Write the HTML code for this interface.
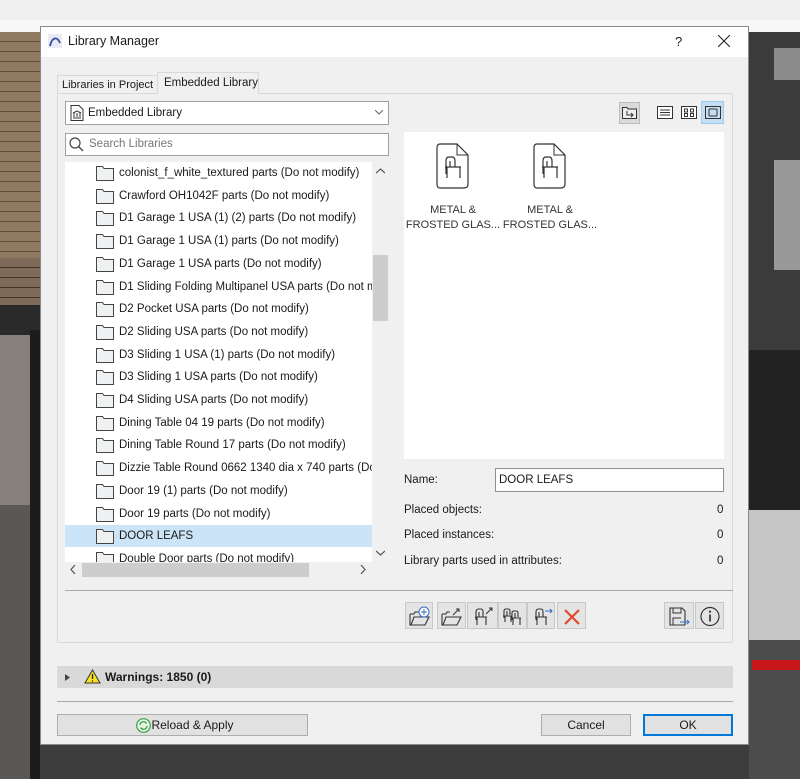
<!DOCTYPE html>
<html><head><meta charset="utf-8"><style>
*{box-sizing:border-box;margin:0;padding:0}
body{width:800px;height:779px;position:relative;overflow:hidden;background:#eeeeee;font-family:"Liberation Sans",sans-serif;font-size:11.5px;color:#1a1a1a}
.a{position:absolute;white-space:nowrap}
.row{position:absolute;left:0;height:22px;width:307px;line-height:22px;white-space:nowrap;overflow:hidden}
.row svg{position:absolute;left:31px;top:3px}
.row span{position:absolute;left:54px}
.tb{position:absolute;top:602px;height:27px;background:#e4e4e4;border:1px solid #c8c8c8}
.tb svg{position:absolute;left:3px;top:3px}
.btn{position:absolute;background:#e1e1e1;border:1px solid #adadad;text-align:center;line-height:20px;font-size:12px}
</style></head><body>
<div class="a" style="left:0;top:0;width:800px;height:20px;background:#f0f0f0"></div>
<div class="a" style="left:0;top:20px;width:800px;height:12px;background:#f7f7f7"></div>
<div class="a" style="left:0;top:32px;width:40px;height:226px;background:repeating-linear-gradient(#917a62 0 9px,#5e4d3d 9px 10px)"></div>
<div class="a" style="left:0;top:258px;width:40px;height:52px;background:repeating-linear-gradient(#7d6a58 0 9px,#3f352b 9px 10px)"></div>
<div class="a" style="left:0;top:305px;width:40px;height:30px;background:#2a2a2a"></div>
<div class="a" style="left:0;top:335px;width:40px;height:170px;background:#86807a"></div>
<div class="a" style="left:30px;top:330px;width:10px;height:449px;background:#1c1c1c"></div>
<div class="a" style="left:0;top:505px;width:30px;height:274px;background:#5a5755"></div>
<div class="a" style="left:749px;top:32px;width:51px;height:318px;background:#3b3b3b"></div>
<div class="a" style="left:774px;top:48px;width:26px;height:32px;background:#8b8b8b"></div>
<div class="a" style="left:774px;top:160px;width:26px;height:110px;background:#999"></div>
<div class="a" style="left:749px;top:350px;width:51px;height:160px;background:#222"></div>
<div class="a" style="left:749px;top:510px;width:51px;height:130px;background:#c6c6c6"></div>
<div class="a" style="left:749px;top:640px;width:51px;height:139px;background:#4c4c4c"></div>
<div class="a" style="left:752px;top:660px;width:48px;height:10px;background:#c8161b"></div>
<div class="a" style="left:40px;top:745px;width:709px;height:34px;background:#3d3d3d"></div>

<div class="a" style="left:40px;top:26px;width:709px;height:719px;background:#f0f0f0;border:1px solid #8a8a8a"></div>
<div class="a" style="left:41px;top:27px;width:707px;height:30px;background:#fff"></div>
<svg class="a" style="left:48px;top:34px" width="14" height="14"><rect width="14" height="14" fill="#e8eaf4"/><path d="M2 12 C4 3 9 2 12 9" stroke="#3c4aa0" stroke-width="1.8" fill="none"/></svg>
<div class="a" style="left:68px;top:34px;font-size:12.5px">Library Manager</div>
<div class="a" style="left:675px;top:34px;font-size:13px">?</div>
<svg class="a" style="left:718px;top:35px" width="12" height="12"><path d="M0 0L12 12M12 0L0 12" stroke="#222" stroke-width="1.1"/></svg>

<div class="a" style="left:57px;top:93px;width:676px;height:550px;border:1px solid #d9d9d9;background:#f0f0f0"></div>
<div class="a" style="left:57px;top:75px;width:101px;height:19px;border:1px solid #d9d9d9;border-bottom:none;line-height:18px;padding-left:4px;font-size:11px;overflow:hidden">Libraries in Project</div>
<div class="a" style="left:157px;top:72px;width:102px;height:22px;border:1px solid #d9d9d9;border-bottom:none;background:#f0f0f0;line-height:20px;padding-left:6px;font-size:11.5px">Embedded Library</div>

<div class="a" style="left:65px;top:101px;width:324px;height:24px;background:#fff;border:1px solid #a0a0a0"></div>
<svg class="a" style="left:70px;top:105px" width="14" height="16"><path d="M1 .5H9L13 4.5V15.5H1Z" fill="#fff" stroke="#333"/><path d="M3 8L7 6L11 8M4 8V12M7 8V12M10 8V12M3 13H11" stroke="#333" fill="none"/></svg>
<div class="a" style="left:88px;top:107px">Embedded Library</div>
<svg class="a" style="left:375px;top:110px" width="8" height="6"><path d="M0 0L4 4L8 0" stroke="#666" fill="none"/></svg>
<div class="a" style="left:65px;top:133px;width:324px;height:23px;background:#fff;border:1px solid #a0a0a0"></div>
<svg class="a" style="left:69px;top:137px" width="15" height="15"><circle cx="6" cy="6" r="5" stroke="#444" stroke-width="1.2" fill="none"/><path d="M9.5 9.5L14 14" stroke="#444" stroke-width="1.3"/></svg>
<div class="a" style="left:89px;top:138px;color:#777">Search Libraries</div>

<div class="a" style="left:65px;top:162px;width:307px;height:400px;background:#fff;overflow:hidden">
<div class="row" style="top:0"><svg width="18" height="16"><path d="M.5 2.5V15.5H17.5V3.5H8L6.5 1.5H.5Z" fill="#eef0f2" stroke="#444"/></svg><span>colonist_f_white_textured parts (Do not modify)</span></div>
<div class="row" style="top:22.7px"><svg width="18" height="16"><path d="M.5 2.5V15.5H17.5V3.5H8L6.5 1.5H.5Z" fill="#eef0f2" stroke="#444"/></svg><span>Crawford OH1042F parts (Do not modify)</span></div>
<div class="row" style="top:45.4px"><svg width="18" height="16"><path d="M.5 2.5V15.5H17.5V3.5H8L6.5 1.5H.5Z" fill="#eef0f2" stroke="#444"/></svg><span>D1 Garage 1 USA (1) (2) parts (Do not modify)</span></div>
<div class="row" style="top:68.1px"><svg width="18" height="16"><path d="M.5 2.5V15.5H17.5V3.5H8L6.5 1.5H.5Z" fill="#eef0f2" stroke="#444"/></svg><span>D1 Garage 1 USA (1) parts (Do not modify)</span></div>
<div class="row" style="top:90.8px"><svg width="18" height="16"><path d="M.5 2.5V15.5H17.5V3.5H8L6.5 1.5H.5Z" fill="#eef0f2" stroke="#444"/></svg><span>D1 Garage 1 USA parts (Do not modify)</span></div>
<div class="row" style="top:113.5px"><svg width="18" height="16"><path d="M.5 2.5V15.5H17.5V3.5H8L6.5 1.5H.5Z" fill="#eef0f2" stroke="#444"/></svg><span>D1 Sliding Folding Multipanel USA parts (Do not modify)</span></div>
<div class="row" style="top:136.2px"><svg width="18" height="16"><path d="M.5 2.5V15.5H17.5V3.5H8L6.5 1.5H.5Z" fill="#eef0f2" stroke="#444"/></svg><span>D2 Pocket USA parts (Do not modify)</span></div>
<div class="row" style="top:158.9px"><svg width="18" height="16"><path d="M.5 2.5V15.5H17.5V3.5H8L6.5 1.5H.5Z" fill="#eef0f2" stroke="#444"/></svg><span>D2 Sliding USA parts (Do not modify)</span></div>
<div class="row" style="top:181.6px"><svg width="18" height="16"><path d="M.5 2.5V15.5H17.5V3.5H8L6.5 1.5H.5Z" fill="#eef0f2" stroke="#444"/></svg><span>D3 Sliding 1 USA (1) parts (Do not modify)</span></div>
<div class="row" style="top:204.3px"><svg width="18" height="16"><path d="M.5 2.5V15.5H17.5V3.5H8L6.5 1.5H.5Z" fill="#eef0f2" stroke="#444"/></svg><span>D3 Sliding 1 USA parts (Do not modify)</span></div>
<div class="row" style="top:227px"><svg width="18" height="16"><path d="M.5 2.5V15.5H17.5V3.5H8L6.5 1.5H.5Z" fill="#eef0f2" stroke="#444"/></svg><span>D4 Sliding USA parts (Do not modify)</span></div>
<div class="row" style="top:249.7px"><svg width="18" height="16"><path d="M.5 2.5V15.5H17.5V3.5H8L6.5 1.5H.5Z" fill="#eef0f2" stroke="#444"/></svg><span>Dining Table 04 19 parts (Do not modify)</span></div>
<div class="row" style="top:272.4px"><svg width="18" height="16"><path d="M.5 2.5V15.5H17.5V3.5H8L6.5 1.5H.5Z" fill="#eef0f2" stroke="#444"/></svg><span>Dining Table Round 17 parts (Do not modify)</span></div>
<div class="row" style="top:295.1px"><svg width="18" height="16"><path d="M.5 2.5V15.5H17.5V3.5H8L6.5 1.5H.5Z" fill="#eef0f2" stroke="#444"/></svg><span>Dizzie Table Round 0662 1340 dia x 740 parts (Do not modify)</span></div>
<div class="row" style="top:317.8px"><svg width="18" height="16"><path d="M.5 2.5V15.5H17.5V3.5H8L6.5 1.5H.5Z" fill="#eef0f2" stroke="#444"/></svg><span>Door 19 (1) parts (Do not modify)</span></div>
<div class="row" style="top:340.5px"><svg width="18" height="16"><path d="M.5 2.5V15.5H17.5V3.5H8L6.5 1.5H.5Z" fill="#eef0f2" stroke="#444"/></svg><span>Door 19 parts (Do not modify)</span></div>
<div class="row" style="top:363.2px;background:#cce4f7"><svg width="18" height="16"><path d="M.5 2.5V15.5H17.5V3.5H8L6.5 1.5H.5Z" fill="#eef0f2" stroke="#444"/></svg><span>DOOR LEAFS</span></div>
<div class="row" style="top:385.9px"><svg width="18" height="16"><path d="M.5 2.5V15.5H17.5V3.5H8L6.5 1.5H.5Z" fill="#eef0f2" stroke="#444"/></svg><span>Double Door parts (Do not modify)</span></div>
</div>
<div class="a" style="left:372px;top:162px;width:17px;height:400px;background:#f0f0f0"></div>
<div class="a" style="left:373px;top:255px;width:15px;height:66px;background:#cdcdcd"></div>
<svg class="a" style="left:376px;top:168px" width="9" height="6"><path d="M0 5L4.5 1L9 5" stroke="#555" fill="none" stroke-width="1.2"/></svg>
<svg class="a" style="left:376px;top:550px" width="9" height="6"><path d="M0 1L4.5 5L9 1" stroke="#555" fill="none" stroke-width="1.2"/></svg>
<div class="a" style="left:65px;top:562px;width:307px;height:16px;background:#f0f0f0"></div>
<div class="a" style="left:82px;top:563px;width:227px;height:14px;background:#cdcdcd"></div>
<svg class="a" style="left:70px;top:565px" width="6" height="9"><path d="M5 0L1 4.5L5 9" stroke="#555" fill="none" stroke-width="1.2"/></svg>
<svg class="a" style="left:360px;top:565px" width="6" height="9"><path d="M1 0L5 4.5L1 9" stroke="#555" fill="none" stroke-width="1.2"/></svg>
<div class="a" style="left:65px;top:590px;width:668px;height:1px;background:#a8a8a8"></div>

<div class="a" style="left:619px;top:102px;width:21px;height:22px;background:#dadada;border:1px solid #bdbdbd"></div>
<svg class="a" style="left:622px;top:106px" width="15" height="13"><path d="M.5 1.5H5L6 3H14.5V12.5H.5Z" fill="#eee" stroke="#333"/><path d="M5 5V9H11M9 7L11 9L9 11" stroke="#333" fill="none"/></svg>
<svg class="a" style="left:657px;top:106px" width="16" height="13"><rect x=".5" y=".5" width="15" height="12" fill="#fff" stroke="#333"/><path d="M3 4H13M3 6.5H13M3 9H13" stroke="#333"/></svg>
<svg class="a" style="left:681px;top:106px" width="16" height="13"><rect x=".5" y=".5" width="15" height="12" fill="#fff" stroke="#333"/><rect x="3.5" y="3" width="3" height="3" fill="none" stroke="#333"/><rect x="9.5" y="3" width="3" height="3" fill="none" stroke="#333"/><rect x="3.5" y="7.5" width="3" height="3" fill="none" stroke="#333"/><rect x="9.5" y="7.5" width="3" height="3" fill="none" stroke="#333"/></svg>
<div class="a" style="left:701px;top:101px;width:23px;height:23px;background:#c4dff3;border:1px solid #9ccbea"></div>
<svg class="a" style="left:705px;top:106px" width="16" height="13"><rect x=".5" y=".5" width="15" height="12" fill="none" stroke="#333"/><rect x="4" y="3" width="8" height="7" rx="1" fill="none" stroke="#333"/></svg>

<div class="a" style="left:404px;top:132px;width:320px;height:327px;background:#fff"></div>
<svg class="a" style="left:436px;top:143px" width="34" height="46"><path d="M4 1H21L32 12V41Q32 45 28 45H4Q1 45 1 41V5Q1 1 4 1Z" fill="#fff" stroke="#333" stroke-width="1.2"/><path d="M21 1V12H32" fill="none" stroke="#333"/><path d="M10 31V18Q10 14 13 14H16Q19 14 19 18V24M9 24H25M11 24V35M24 24V35M14 18V24" fill="none" stroke="#333" stroke-width="1.2"/></svg>
<svg class="a" style="left:533px;top:143px" width="34" height="46"><path d="M4 1H21L32 12V41Q32 45 28 45H4Q1 45 1 41V5Q1 1 4 1Z" fill="#fff" stroke="#333" stroke-width="1.2"/><path d="M21 1V12H32" fill="none" stroke="#333"/><path d="M10 31V18Q10 14 13 14H16Q19 14 19 18V24M9 24H25M11 24V35M24 24V35M14 18V24" fill="none" stroke="#333" stroke-width="1.2"/></svg>
<div class="a" style="left:404px;top:203px;width:98px;text-align:center;line-height:15px;font-size:11px;color:#333">METAL &amp;<br>FROSTED GLAS...</div>
<div class="a" style="left:501px;top:203px;width:98px;text-align:center;line-height:15px;font-size:11px;color:#333">METAL &amp;<br>FROSTED GLAS...</div>

<div class="a" style="left:404px;top:474px">Name:</div>
<div class="a" style="left:495px;top:468px;width:229px;height:24px;background:#fff;border:1px solid #8f8f8f;padding:5px 0 0 3px">DOOR LEAFS</div>
<div class="a" style="left:404px;top:504px">Placed objects:</div><div class="a" style="left:717px;top:504px">0</div>
<div class="a" style="left:404px;top:529px">Placed instances:</div><div class="a" style="left:717px;top:529px">0</div>
<div class="a" style="left:404px;top:555px">Library parts used in attributes:</div><div class="a" style="left:717px;top:555px">0</div>

<div class="tb" style="left:405px;width:28px"><svg width="22" height="21"><path d="M1 8H5L6 6H10M1 8V19H16L20 11H5L2 19" fill="none" stroke="#333" stroke-width="1.1"/><circle cx="15" cy="6" r="5" fill="#fff" stroke="#2e6fc4"/><path d="M15 3V9M12 6H18" stroke="#2e6fc4"/></svg></div>
<div class="tb" style="left:437px;width:29px"><svg width="22" height="21"><path d="M1 8H5L6 6H9M1 8V19H16L20 11H5L2 19" fill="none" stroke="#333" stroke-width="1.1"/><path d="M12 9L18 3M15 3H18V6" stroke="#333" fill="none"/></svg></div>
<div class="tb" style="left:467px;width:31px"><svg width="24" height="21"><path d="M5 14V6Q5 3 8 3H10Q12 3 12 6V11M4 11H16M6 11V19M15 11V19M8 6V11" fill="none" stroke="#333" stroke-width="1.1"/><path d="M15 8L21 2M18 2H21V5" stroke="#333" fill="none"/></svg></div>
<div class="tb" style="left:498px;width:29px"><svg width="24" height="21"><path d="M2 12V5Q2 3 4 3H6Q8 3 8 5V9M1 10H10M3 10V16M9 10V16M5 5V10" fill="none" stroke="#333" stroke-width="1.1"/><path d="M10 14V7Q10 5 12 5H14Q16 5 16 7V11M9 12H19M11 12V19M18 12V19M13 7V12" fill="none" stroke="#333" stroke-width="1.1"/></svg></div>
<div class="tb" style="left:527px;width:28px"><svg width="24" height="21"><path d="M5 14V6Q5 3 8 3H10Q12 3 12 6V11M4 11H16M6 11V19M15 11V19M8 6V11" fill="none" stroke="#333" stroke-width="1.1"/><path d="M14 5H21M19 3L21 5L19 7" stroke="#2e6fc4" fill="none"/></svg></div>
<div class="tb" style="left:557px;width:29px"><svg width="22" height="21"><path d="M4 4L18 18M18 4L4 18" stroke="#e0492a" stroke-width="2.2"/></svg></div>
<div class="tb" style="left:664px;width:30px"><svg width="24" height="21"><path d="M2 2H14L17 5V19H2Z" fill="none" stroke="#333" stroke-width="1.1"/><path d="M5 2V7H13V2M5 19V12H13" fill="none" stroke="#333"/><path d="M12 16H21M19 14L21 16L19 18" stroke="#2e6fc4" fill="none"/></svg></div>
<div class="tb" style="left:695px;width:29px"><svg width="22" height="21"><circle cx="11" cy="10.5" r="9" fill="none" stroke="#333" stroke-width="1.2"/><path d="M11 8.5V15.5" stroke="#333" stroke-width="1.7"/><circle cx="11" cy="5.6" r="1.1" fill="#333"/></svg></div>

<div class="a" style="left:57px;top:666px;width:676px;height:22px;background:#d9d9d9"></div>
<svg class="a" style="left:65px;top:674px" width="5" height="7"><path d="M0 0L5 3.5L0 7Z" fill="#444"/></svg>
<svg class="a" style="left:84px;top:669px" width="17" height="15"><path d="M8.5 1L16 14H1Z" fill="#f6e31c" stroke="#333"/><path d="M8.5 5V10" stroke="#222" stroke-width="1.3"/><circle cx="8.5" cy="12" r=".8" fill="#222"/></svg>
<div class="a" style="left:105px;top:670px;font-weight:bold;font-size:12px">Warnings: 1850 (0)</div>
<div class="a" style="left:57px;top:701px;width:676px;height:1px;background:#a8a8a8"></div>

<div class="btn" style="left:57px;top:714px;width:251px;height:22px"><svg style="position:absolute;left:78px;top:3px" width="15" height="15"><circle cx="7.5" cy="7.5" r="6.8" fill="#e5f3e3" stroke="#3aa24a" stroke-width="1.2"/><path d="M4 7A3.5 3.5 0 0 1 10.5 5.5M11 8A3.5 3.5 0 0 1 4.5 9.5" stroke="#3aa24a" stroke-width="1.3" fill="none"/></svg><span style="padding-left:20px">Reload &amp; Apply</span></div>
<div class="btn" style="left:541px;top:714px;width:90px;height:22px">Cancel</div>
<div class="btn" style="left:643px;top:714px;width:90px;height:22px;border:2px solid #0078d7;line-height:18px">OK</div>
</body></html>
